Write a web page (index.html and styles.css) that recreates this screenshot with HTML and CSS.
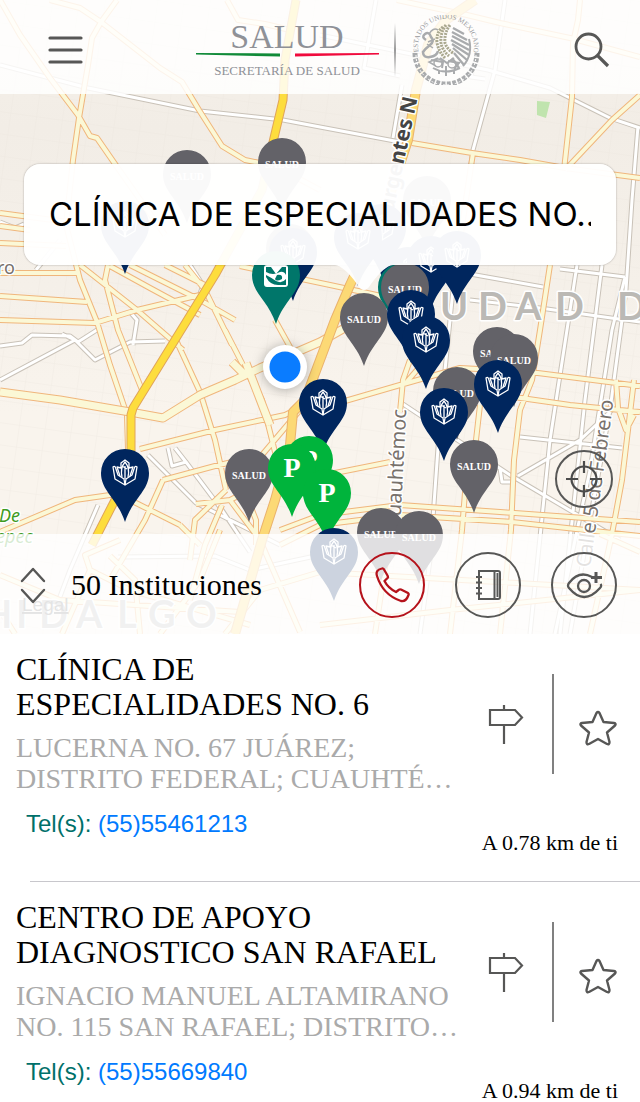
FILE: index.html
```html
<!DOCTYPE html>
<html lang="es">
<head>
<meta charset="utf-8">
<meta name="viewport" content="width=device-width, initial-scale=1">
<title>Secretaría de Salud</title>
<link rel="stylesheet" href="styles.css">
</head>
<body>
<div class="app">
  <section class="map">
    <svg class="map-canvas" viewBox="0 0 640 634" preserveAspectRatio="xMidYMid slice" role="img" aria-label="Mapa de instituciones">
      <defs>
        <linearGradient id="land" x1="0" y1="0" x2="0" y2="1">
          <stop offset="0" stop-color="#f6f1ea"/><stop offset=".2" stop-color="#f2ede6"/><stop offset=".45" stop-color="#f5f0e9"/><stop offset=".65" stop-color="#f9f4ed"/>
        </linearGradient>
        <pattern id="blocks" width="26" height="22" patternUnits="userSpaceOnUse" patternTransform="rotate(8)">
          <path d="M0 0H26M0 0V22" fill="none" stroke="#e9e3db" stroke-width="1"/>
        </pattern>
        <path id="street-white" d="M0 65L88 88 200 111 283 120 320 127 400 142M505 0L495 70 473 150 455 270 440 420 430 560 420 634M376 0L364 68 400 76M320 35L440 60 488 70 550 88 610 118 640 128M402 85L393 138M488 70L473 67 471 77 485 79M638 126L632 200 626 290 610 410 590 520 570 634M0 222L15 228 24 224M60 240L36 270M0 346L22 343 32 335 70 336 78 342 100 328M0 380L75 340 95 360 130 342 165 341M75 340L62 334M130 312L137 320 133 345M148 455L196 503 280 545M168 448L172 466 186 462 175 448M186 462L222 510 250 552M98 505L70 570 55 610M118 557L215 556 250 570 320 555M190 265L203 285 195 308M470 274L543 287M560 269L625 277M470 300L540 308 640 322M577 265L550 440 530 634M602 265L585 400 560 634M625 277L612 330 590 470 555 634M520 437L622 448M403 404L510 475 620 540M518 476L580 440 612 410M500 468L502 482 513 482"/>
        <path id="street-cream" d="M0 0L20 35 50 78 78 115 90 136 97 138 115 164 165 235M117 0L101 22 92 38 88 65 79 118 73 160 66 225 80 280 97 322 110 365 127 415 128 450M50 0L80 8 101 22 160 68 182 82 199 110 222 146 245 160 275 166 320 190M227 0L238 20 265 24 290 30M397 0L467 15 500 23 570 38 640 57M580 0L578 20 573 43 572 97 564 170M640 95L612 120 565 170M412 143L472 153 520 160 565 168 640 178M473 153L460 240M0 213L30 217 68 222M0 226L30 230M0 243L66 246M0 273L77 273M0 296L87 302M0 320L95 323 137 310 200 295M80 265L137 310 183 350M110 266L150 288 200 315M108 265L105 280 118 330 142 390M130 265L200 300 235 320M165 265L205 285M240 266L330 285 400 300M185 265L205 290 232 345M176 340L200 392 215 440 226 490M225 330L243 365 262 400 277 460M275 320L300 365M140 449L215 430 285 415 295 410M163 480L215 466 262 455 300 410M0 532L75 500 110 495 128 490M163 480L145 520 110 580M130 500L180 525M196 504L230 500 270 480M226 490L195 520 190 560M222 505L205 545 190 600M230 500L260 540 300 632M248 500L256 520 256 545M180 525L200 545M280 530L320 515 400 505 500 512 640 522M280 545L320 525 400 515 512 522 640 536M300 480L390 462M345 401L400 385 460 368 530 372 640 386M410 360L403 380 400 412M430 355L404 385M500 395L570 405 640 412M550 265L540 330 532 380 520 410 514 460 511 530 500 634M480 405L476 440 466 480 462 530 450 634M634 380L622 480 612 534 590 634M616 380L618 408 626 430 634 415M380 280L415 290M380 296L350 330M120 540L85 555 90 570 62 634M90 570L130 590 250 625M0 575L60 600 240 612M160 634L200 580 220 530M0 610L15 634M110 556L135 580 140 634M225 634L260 590 320 572 640 590M320 625L450 610 640 590M600 534L640 552M390 534L375 634"/>
        <path id="avenue-cream" d="M0 392L60 400 130 412 163 418 200 395 235 380 260 368 320 342 350 325M246 363L270 425M232 362L245 375"/>
        <path id="avenue-gold" d="M475 0L446 20 428 45 416 90 408 140 385 210 350 285 335 320 320 360 305 400 293 412 290 445 275 500 262 540 235 634"/>
        <path id="avenue-yellow" d="M296 0L285 60 283 100 274 138 262 190 215 275 178 335 133 408 131 415 131 450 125 480 115 500 92 545"/>
        <path id="pin" d="M0 0C-8 -24 -24 -31 -24 -49A24 24 0 0 1 24 -49C24 -31 8 -24 0 0Z"/>
        <g id="pin-salud"><use href="#pin" fill="#636268"/><text class="pin-salud-label" y="-43">SALUD</text></g>
        <g id="pin-parking"><use href="#pin" fill="#00b43c"/><text class="pin-parking-label" y="-40">P</text></g>
        <g id="pin-imss"><use href="#pin" fill="#00766a"/><rect x="-12" y="-59" width="24" height="22" rx="3" fill="#fff"/>
          <path d="M-10 -57L-5 -57 0 -50 6 -57 10 -57V-49Q8 -53 4 -52Q-3 -48 -10 -52ZM-10 -47Q-6 -39 2 -39H10V-45Q6 -40 0 -43Q-4 -46 -10 -49ZM1 -49Q7 -50 6 -45Q0 -42 -1 -45Z" fill="#00766a"/></g>
        <g id="pin-hands"><use href="#pin" fill="#00265e"/>
          <g fill="none" stroke="#fff" stroke-width="1.3" stroke-linejoin="round">
            <path d="M0 -37L-10 -43 -12 -55Q-10 -57 -9 -53L-7 -47 -1 -43ZM0 -37L10 -43 12 -55Q10 -57 9 -53L7 -47 1 -43Z"/>
            <path d="M-5 -46L-8 -55 -4 -54 -4 -59 0 -62 4 -59 4 -54 8 -55 5 -46M-3 -45Q-5 -54 0 -60Q5 -54 3 -45M0 -43V-56M-3 -56L2 -53"/>
          </g></g>
      </defs>

      <rect width="640" height="634" fill="url(#land)"/>
      <rect width="640" height="634" fill="url(#blocks)" opacity=".5"/>
      <path d="M537 101L550 102 546 118 537 115Z" fill="#c0e4ae"/>
      <g class="road">
        <use href="#street-white" stroke="#c9c2b8" stroke-width="5"/><use href="#street-white" stroke="#fff" stroke-width="3"/>
        <use href="#street-cream" stroke="#f0b67c" stroke-width="6"/><use href="#street-cream" stroke="#fbf8d6" stroke-width="4"/>
        <use href="#avenue-cream" stroke="#f0b67c" stroke-width="9"/><use href="#avenue-cream" stroke="#fbf8d6" stroke-width="7"/>
        <use href="#avenue-gold" stroke="#eab26c" stroke-width="10"/><use href="#avenue-gold" stroke="#fcd975" stroke-width="8"/>
        <use href="#avenue-yellow" stroke="#e0a45a" stroke-width="9"/><use href="#avenue-yellow" stroke="#fddd3d" stroke-width="7"/>
      </g>

      <g class="map-labels">
        <text class="label-avenue" transform="translate(391 223) rotate(-78)">surgentes N</text>
        <text class="label-city" x="440 478 515 555 617" y="320">UDADD</text>
        <text class="label-district" x="-17 16 39 76 117 148 186" y="628">HIDALGO</text>
        <text class="label-street" transform="translate(400 529) rotate(-87)">Cuauhtémoc</text>
        <text class="label-street" transform="translate(590 568) rotate(-82)">Calle 5 de Febrero</text>
        <text class="label-place" x="-3" y="274">ro</text>
        <text class="label-park" x="-1" y="522">De</text>
        <text class="label-park" x="-4" y="543">epec</text>
        <a href="#legal"><text class="label-legal" x="22" y="611">Legal</text></a>
      </g>

      <g class="pins">
        <use href="#pin-salud" x="187" y="223"/><use href="#pin-salud" x="282" y="211"/>
        <use href="#pin-hands" x="125" y="274"/><use href="#pin-salud" x="290" y="297"/>
        <use href="#pin-hands" x="293" y="301"/><use href="#pin-imss" x="276" y="324"/>
        <use href="#pin-salud" x="427" y="249"/><use href="#pin-hands" x="382" y="277"/><use href="#pin-hands" x="358" y="286"/>
        <use href="#pin-hands" x="408" y="320"/><use href="#pin-hands" x="431" y="309"/><use href="#pin-hands" x="457" y="304"/>
        <use href="#pin-imss" x="402" y="336"/><use href="#pin-salud" x="405" y="336"/>
        <use href="#pin-salud" x="364" y="366"/><use href="#pin-hands" x="411" y="363"/><use href="#pin-hands" x="426" y="389"/>
        <use href="#pin-salud" x="497" y="400"/><use href="#pin-salud" x="514" y="407"/><use href="#pin-salud" x="457" y="440"/>
        <use href="#pin-hands" x="498" y="433"/><use href="#pin-hands" x="444" y="461"/><use href="#pin-salud" x="474" y="513"/>
        <use href="#pin-hands" x="323" y="452"/><use href="#pin-hands" x="125" y="522"/><use href="#pin-salud" x="249" y="522"/>
        <use href="#pin-parking" x="309" y="509"/><use href="#pin-parking" x="292" y="517"/><use href="#pin-parking" x="327" y="542"/>
        <use href="#pin-salud" x="381" y="581"/><use href="#pin-salud" x="419" y="584"/><use href="#pin-hands" x="334" y="601"/>
      </g>
      <g class="my-location"><circle cx="285" cy="367" r="22" fill="#fff"/><circle cx="285" cy="367" r="15.500" fill="#0a7cff"/></g>
    </svg>

    <header class="topbar">
      <button class="icon-button" type="button" aria-label="Menú">
        <svg width="36" height="30" viewBox="0 0 36 30" fill="none" stroke="#575756" stroke-width="3.200" stroke-linecap="round"><path d="M2 3H33M2 15H33M2 27H33"/></svg>
      </button>
      <div class="brand">
        <div class="brand-name">
          <strong class="brand-title">SALUD</strong>
          <svg width="183" height="4" viewBox="0 0 183 4"><path d="M0 0L84 .5V3.500L0 1.500Z" fill="#108a38"/><path d="M99 .5L183 0V1.500L99 3.500Z" fill="#f00a3c"/></svg>
          <span class="brand-subtitle">SECRETARÍA DE SALUD</span>
        </div>
        <span class="brand-rule"></span>
        <svg class="seal" width="70" height="70" viewBox="0 0 70 70" role="img" aria-label="Estados Unidos Mexicanos">
          <defs><path id="seal-arc" d="M7.500 37A28 28 0 1 1 62.500 37"/></defs>
          <text class="seal-text"><textPath href="#seal-arc" textLength="0">ESTADOS UNIDOS MEXICANOS</textPath></text>
          <g fill="none" stroke="#a9abad">
            <path d="M4 38A31 31 0 0 0 66 38" stroke-width="5" stroke-dasharray="4 1.500"/>
            <path d="M5 40A30 30 0 0 0 65 40" stroke="#fff" stroke-width="1" stroke-dasharray="2 2"/>
            <path d="M15 25Q10 22 14 19T20 22Q24 26 19 30T12 37Q12 43 19 42T27 36" stroke-width="2.500"/>
            <path d="M18 19Q22 12 27 15M22 33L16 29M27 43L18 47 25 51M24 24L17 27" stroke-width="1.500"/>
            <path d="M32 12Q25 17 26 28Q28 37 34 43M35 10Q29 18 30 28Q31 35 38 41M39 10Q33 18 34 28Q36 34 42 38" stroke="#aaa88f" stroke-width="3" stroke-dasharray="2 1"/>
            <path d="M42 13L53 19M41 17L56 25M41 21L58 30M40 25L58 35M41 29L58 40M42 33L56 45M43 38L53 50M41 43L48 53" stroke-width="2.300"/>
            <path d="M58 24Q62 40 52 51M22 53Q34 60 49 53M20 45L32 47 31 53M37 46L48 48 43 54M29 43L36 48 43 43M28 55V59M35 51V61M43 55V59" stroke-width="2"/>
            <circle cx="27" cy="48" r="4" stroke-width="1.500"/><circle cx="41" cy="49" r="4" stroke-width="1.500"/>
          </g>
        </svg>
      </div>
      <button class="icon-button icon-button-end" type="button" aria-label="Buscar">
        <svg width="36" height="36" viewBox="0 0 36 36" fill="none" stroke="#575756" stroke-width="2.800"><circle cx="14.500" cy="14.500" r="12.500"/><path d="M23.500 23.500L34 34" stroke-width="3.200"/></svg>
      </button>
    </header>

    <div class="callout">
      <p class="callout-text">CLÍNICA DE ESPECIALIDADES NO...</p>
      <svg class="callout-tail" width="58" height="26" viewBox="0 0 58 26"><path d="M0 0Q9 1 22 19Q29 31 36 19Q49 1 58 0Z" fill="#fff"/></svg>
    </div>

    <button class="round-button locate" type="button" aria-label="Mi ubicación">
      <svg width="36" height="38" viewBox="0 0 36 38" fill="none" stroke="#4b4b4b" stroke-width="2.200"><circle cx="18" cy="19" r="12.500"/><path d="M18 1V13M18 25V37M0 19H12M24 19H36"/></svg>
    </button>

    <div class="toolbar">
      <button class="count" type="button">
        <svg width="26" height="37" viewBox="0 0 26 37" fill="none" stroke="#575756" stroke-width="2.400" stroke-linecap="round" stroke-linejoin="round"><path d="M2 14L13 2 24 14M2 23L13 35 24 23"/></svg>
        <span>50 Instituciones</span>
      </button>
      <div class="actions">
        <button class="round-button danger" type="button" aria-label="Llamar">
          <svg width="36" height="36" viewBox="0 0 36 36" fill="none" stroke="#b5121b" stroke-width="2.300" stroke-linejoin="round"><path d="M8 1.500Q1 3 3 9Q9 28 27 34Q32 35 34.500 28Q35 27 34 26L27 22.500Q25 22 24 23.500L22 25Q14 21 10.500 14L14 10.500Q14 9.500 13.500 8.500L10 2.500Q9 1 8 1.500Z"/></svg>
        </button>
        <button class="round-button" type="button" aria-label="Directorio">
          <svg width="26" height="32" viewBox="0 0 26 32" fill="none" stroke="#575756" stroke-width="2"><path d="M4 2H23Q25 2 25 4V28Q25 30 23 30H4ZM19.500 2V30M22.500 4V28M1 8H7M1 13.500H7M1 19H7M1 24.500H7"/></svg>
        </button>
        <button class="round-button" type="button" aria-label="Mostrar más">
          <svg width="38" height="28" viewBox="0 0 38 28" fill="none" stroke="#575756" stroke-width="2.300"><path d="M27 6Q14 -1 4 12Q2 15 4 17Q19 35 35 17Q37 15 35.500 13"/><circle cx="19" cy="15" r="6"/><path d="M31 1V12M26 6.500H37" stroke-width="3"/></svg>
        </button>
      </div>
    </div>
  </section>

  <main class="results">
    <article class="result">
      <div class="result-info">
        <h2 class="result-name">CLÍNICA DE ESPECIALIDADES NO. 6</h2>
        <p class="result-address">LUCERNA NO. 67 JUÁREZ; DISTRITO FEDERAL; CUAUHTÉ…</p>
        <p class="result-phone">Tel(s): <a href="tel:5555461213">(55)55461213</a></p>
      </div>
      <div class="result-side">
        <div class="result-actions">
          <button class="icon-button" type="button" aria-label="Cómo llegar"><svg width="36" height="40" viewBox="0 0 36 40" fill="none" stroke="#575756" stroke-width="2.200"><path d="M2 6H27L34 13.500 27 21H2ZM16 1V6M16 21V40"/></svg></button>
          <button class="icon-button star" type="button" aria-label="Favorito"><svg width="38" height="36" viewBox="0 0 38 36" fill="none" stroke="#575756" stroke-width="2.400" stroke-linejoin="round"><path d="M17.500 3Q19 1 20.500 3L24.500 12 35 13Q37.500 13.500 36 15.500L28 22.500 30.500 32Q30.500 35 28 34L19 29 10 34Q7.500 35 7.500 32L10 22.500 2 15.500Q.5 13.500 3 13L13.500 12Z"/></svg></button>
        </div>
        <p class="result-distance">A 0.78 km de ti</p>
      </div>
    </article>
    <article class="result">
      <div class="result-info">
        <h2 class="result-name">CENTRO DE APOYO DIAGNOSTICO SAN RAFAEL</h2>
        <p class="result-address">IGNACIO MANUEL ALTAMIRANO NO. 115 SAN RAFAEL; DISTRITO…</p>
        <p class="result-phone">Tel(s): <a href="tel:5555669840">(55)55669840</a></p>
      </div>
      <div class="result-side">
        <div class="result-actions">
          <button class="icon-button" type="button" aria-label="Cómo llegar"><svg width="36" height="40" viewBox="0 0 36 40" fill="none" stroke="#575756" stroke-width="2.200"><path d="M2 6H27L34 13.500 27 21H2ZM16 1V6M16 21V40"/></svg></button>
          <button class="icon-button star" type="button" aria-label="Favorito"><svg width="38" height="36" viewBox="0 0 38 36" fill="none" stroke="#575756" stroke-width="2.400" stroke-linejoin="round"><path d="M17.500 3Q19 1 20.500 3L24.500 12 35 13Q37.500 13.500 36 15.500L28 22.500 30.500 32Q30.500 35 28 34L19 29 10 34Q7.500 35 7.500 32L10 22.500 2 15.500Q.5 13.500 3 13L13.500 12Z"/></svg></button>
        </div>
        <p class="result-distance">A 0.94 km de ti</p>
      </div>
    </article>
  </main>
</div>
</body>
</html>
```

FILE: styles.css
```css
* { box-sizing: border-box; }
body { margin: 0; background: #fff; color: #000; font-family: "Liberation Serif", serif; }
h2, p { margin: 0; font-weight: 400; }
button { margin: 0; padding: 0; border: 0; background: none; color: inherit; font: inherit; cursor: pointer; }
svg { display: block; }

.app { display: flex; flex-direction: column; height: 100vh; }

/* Map */
.map { position: relative; flex: none; display: flex; flex-direction: column; min-height: 634px; overflow: hidden; }
.map-canvas { position: absolute; inset: 0; width: 100%; height: 100%; }
.road { fill: none; stroke-linejoin: round; }
.map-labels { paint-order: stroke; stroke: #fff; stroke-width: 3px; stroke-linejoin: round; }
.map-labels text { paint-order: stroke; }
.label-avenue { font: 700 21px "Noto Sans", sans-serif; fill: #444; }
.label-city { font: 700 38px Lato, sans-serif; fill: #bbb9b5; }
.label-district { font: 700 38px Lato, sans-serif; fill: #bbb; }
.label-street { font: 20px "Noto Sans", sans-serif; fill: #77716c; }
.label-place { font: 18px "Noto Sans", sans-serif; fill: #77716c; }
.label-park { font: italic 18px "Noto Sans", sans-serif; fill: #3f9b1f; }
.label-legal { font: 19px "Liberation Sans", sans-serif; fill: #777; stroke: none; text-decoration: underline; }
.pin-salud-label { font: 700 10px "Liberation Serif", serif; fill: #fff; text-anchor: middle; }
.pin-parking-label { font: 700 28px "Liberation Serif", serif; fill: #fff; text-anchor: middle; }
.my-location { filter: drop-shadow(0 1px 6px rgba(0, 0, 0, .3)); }

/* Header */
.topbar { position: relative; display: grid; grid-template-columns: 1fr auto 1fr; align-items: center; height: 94px; padding: 6px 30px 0 48px; background: rgba(255, 255, 255, .84); }
.icon-button { display: flex; justify-content: center; align-items: center; justify-self: start; }
.icon-button-end { justify-self: end; }
.brand { display: flex; align-items: center; gap: 15px; margin-left: 18px; }
.brand-name { display: flex; flex-direction: column; align-items: center; color: #8f9197; }
.brand-title { font-size: 34px; font-weight: 400; line-height: 32px; }
.brand-subtitle { margin-top: 6px; font-size: 13px; line-height: 16px; }
.brand-rule { width: 2px; height: 54px; background: linear-gradient(transparent, #999 50%, transparent); }
.seal-text { font: 7px "Liberation Serif", serif; fill: #999b9e; }

/* Callout */
.callout { position: relative; margin: 70px 24px 0; padding: 27px 25px 28px; border-radius: 16px; background: rgba(255, 255, 255, .96); box-shadow: 0 0 2px rgba(0, 0, 0, .35); }
.callout-text { overflow: hidden; font: 33px/46px Inter, sans-serif; white-space: nowrap; }
.callout-tail { position: absolute; top: 100%; left: 311px; opacity: .96; }

.round-button { display: flex; flex: none; justify-content: center; align-items: center; width: 66px; height: 66px; border: 2px solid #575756; border-radius: 50%; }
.danger { border-color: #b5121b; }
.locate { position: relative; align-self: flex-end; width: 58px; height: 58px; margin: auto 27px 26px 0; }

/* Toolbar */
.toolbar { position: relative; display: flex; justify-content: space-between; align-items: center; height: 100px; padding: 2px 23px 0 20px; background: rgba(255, 255, 255, .8); }
.count { display: flex; align-items: center; gap: 25px; font-size: 30px; line-height: 36px; }
.actions { display: flex; gap: 30px; }

/* Results */
.results { flex: 1; min-height: 0; overflow-y: auto; scrollbar-width: none; }
.result { position: relative; display: grid; grid-template-columns: 1fr 180px; min-height: 248px; padding-left: 16px; }
.result::after { content: ""; position: absolute; right: 0; bottom: 0; left: 30px; height: 1px; background: #c8c7cc; }
.result-info { padding-top: 18px; }
.result-name { font-size: 32px; line-height: 35px; }
.result-address { margin-top: 10px; color: #aaa; font-size: 28px; line-height: 31px; }
.result-phone { margin: 15px 0 0 10px; color: #00706a; font: 24px/30px "Liberation Sans", sans-serif; }
.result-phone a { color: #007aff; text-decoration: none; }
.result-side { padding: 40px 22px 0 0; }
.result-actions { display: grid; grid-template-columns: 92px 1fr; height: 100px; }
.result-actions .icon-button { justify-self: stretch; }
.result-actions .star { border-left: 2px solid #808080; padding: 8px 0 0 24px; }
.result-distance { margin-top: 56px; font-size: 22px; line-height: 26px; text-align: right; }
```
